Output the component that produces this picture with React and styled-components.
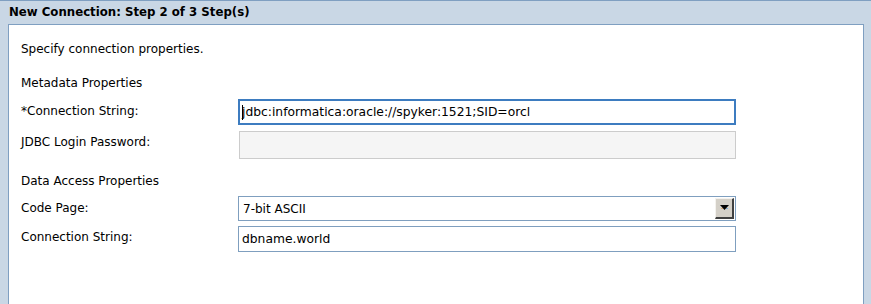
import React from "react";
import styled, { createGlobalStyle } from "styled-components";

const GlobalStyle = createGlobalStyle`
  html, body {
    margin: 0;
    padding: 0;
    background: #c9d7e5;
  }
  body {
    font-family: "DejaVu Sans", Verdana, sans-serif;
    font-size: 12px;
    line-height: 14px;
    color: #000;
  }
`;

const Window = styled.div`
  width: 871px;
  height: 304px;
  box-sizing: border-box;
  background: #c9d7e5;
  border-top: 1px solid #7f9fc1;
  padding: 0 7px 0 8px;
  display: flex;
  flex-direction: column;
  overflow: hidden;
`;

const Title = styled.div`
  height: 23px;
  line-height: 23px;
  padding-left: 1px;
  font-weight: bold;
  font-size: 11.75px;
  color: #000;
`;

const Panel = styled.div`
  flex: 1;
  background: #fff;
  border: 1px solid #7f9fc1;
  border-bottom: none;
  padding: 17px 12px 0 12px;
`;

const Intro = styled.div`
  margin-bottom: 20px;
`;

const Section = styled.div`
  margin-bottom: ${({ $gap }) => $gap || 0}px;
`;

const SectionTitle = styled.div`
  margin-bottom: ${({ $gap }) => $gap || 8}px;
`;

const Row = styled.div`
  display: grid;
  grid-template-columns: 217px 498px;
  align-items: start;
  margin-bottom: ${({ $gap }) => $gap || 0}px;
`;

const Label = styled.div`
  padding-top: ${({ $top }) => $top ?? 5}px;
`;

const TextBox = styled.div`
  box-sizing: border-box;
  height: ${({ $h }) => $h || 26}px;
  width: ${({ $w }) => $w || 498}px;
  margin-left: ${({ $ml }) => $ml || 0}px;
  border: ${({ $focused, $disabled }) =>
    $focused ? "2px solid #3d7cc0" : $disabled ? "1px solid #cccccc" : "1px solid #7f9fbf"};
  background: ${({ $disabled }) => ($disabled ? "#f5f5f5" : "#fff")};
  padding-left: ${({ $focused }) => ($focused ? 2 : 3)}px;
  display: flex;
  align-items: center;
  font-size: 12.3px;
  white-space: nowrap;
  overflow: hidden;
`;

const Caret = styled.span`
  display: inline-block;
  width: 1px;
  height: 15px;
  background: #000;
  margin-right: -1px;
`;

const Select = styled.div`
  box-sizing: border-box;
  height: 25px;
  width: 498px;
  border: 1px solid #7f9fbf;
  background: #fff;
  display: flex;
  align-items: center;
  padding: 0 1px 0 4px;
  font-size: 12px;
`;

const SelectText = styled.span`
  flex: 1;
`;

const DropButton = styled.div`
  box-sizing: border-box;
  width: 19px;
  height: 21px;
  background: #d4d0c8;
  border-top: 1px solid #f4f2ee;
  border-left: 1px solid #f4f2ee;
  border-right: 2px solid #404040;
  border-bottom: 2px solid #404040;
  display: flex;
  align-items: center;
  justify-content: center;
`;

const Arrow = () => (
  <svg width="9" height="6" viewBox="0 0 9 6">
    <polygon points="0,0 9,0 4.5,5" fill="#000" />
    <line x1="1.5" y1="3" x2="2.5" y2="4" stroke="#e08020" strokeWidth="1" />
    <line x1="7.5" y1="3" x2="6.5" y2="4" stroke="#3090e0" strokeWidth="1" />
  </svg>
);

export default function App() {
  return (
    <>
      <GlobalStyle />
      <Window>
        <Title>New Connection: Step 2 of 3 Step(s)</Title>
        <Panel>
          <Intro>Specify connection properties.</Intro>
          <Section $gap={15}>
            <SectionTitle $gap={9}>Metadata Properties</SectionTitle>
            <Row $gap={6}>
              <Label $top={5}>*Connection String:</Label>
              <TextBox $focused>
                <Caret />
                jdbc:informatica:oracle://spyker:1521;SID=orcl
              </TextBox>
            </Row>
            <Row>
              <Label $top={4}>JDBC Login Password:</Label>
              <TextBox $disabled $h={28} $w={497} $ml={1} />
            </Row>
          </Section>
          <Section>
            <SectionTitle $gap={8}>Data Access Properties</SectionTitle>
            <Row $gap={5}>
              <Label $top={5}>Code Page:</Label>
              <Select>
                <SelectText>7-bit ASCII</SelectText>
                <DropButton>
                  <Arrow />
                </DropButton>
              </Select>
            </Row>
            <Row>
              <Label $top={4}>Connection String:</Label>
              <TextBox>dbname.world</TextBox>
            </Row>
          </Section>
        </Panel>
      </Window>
    </>
  );
}
